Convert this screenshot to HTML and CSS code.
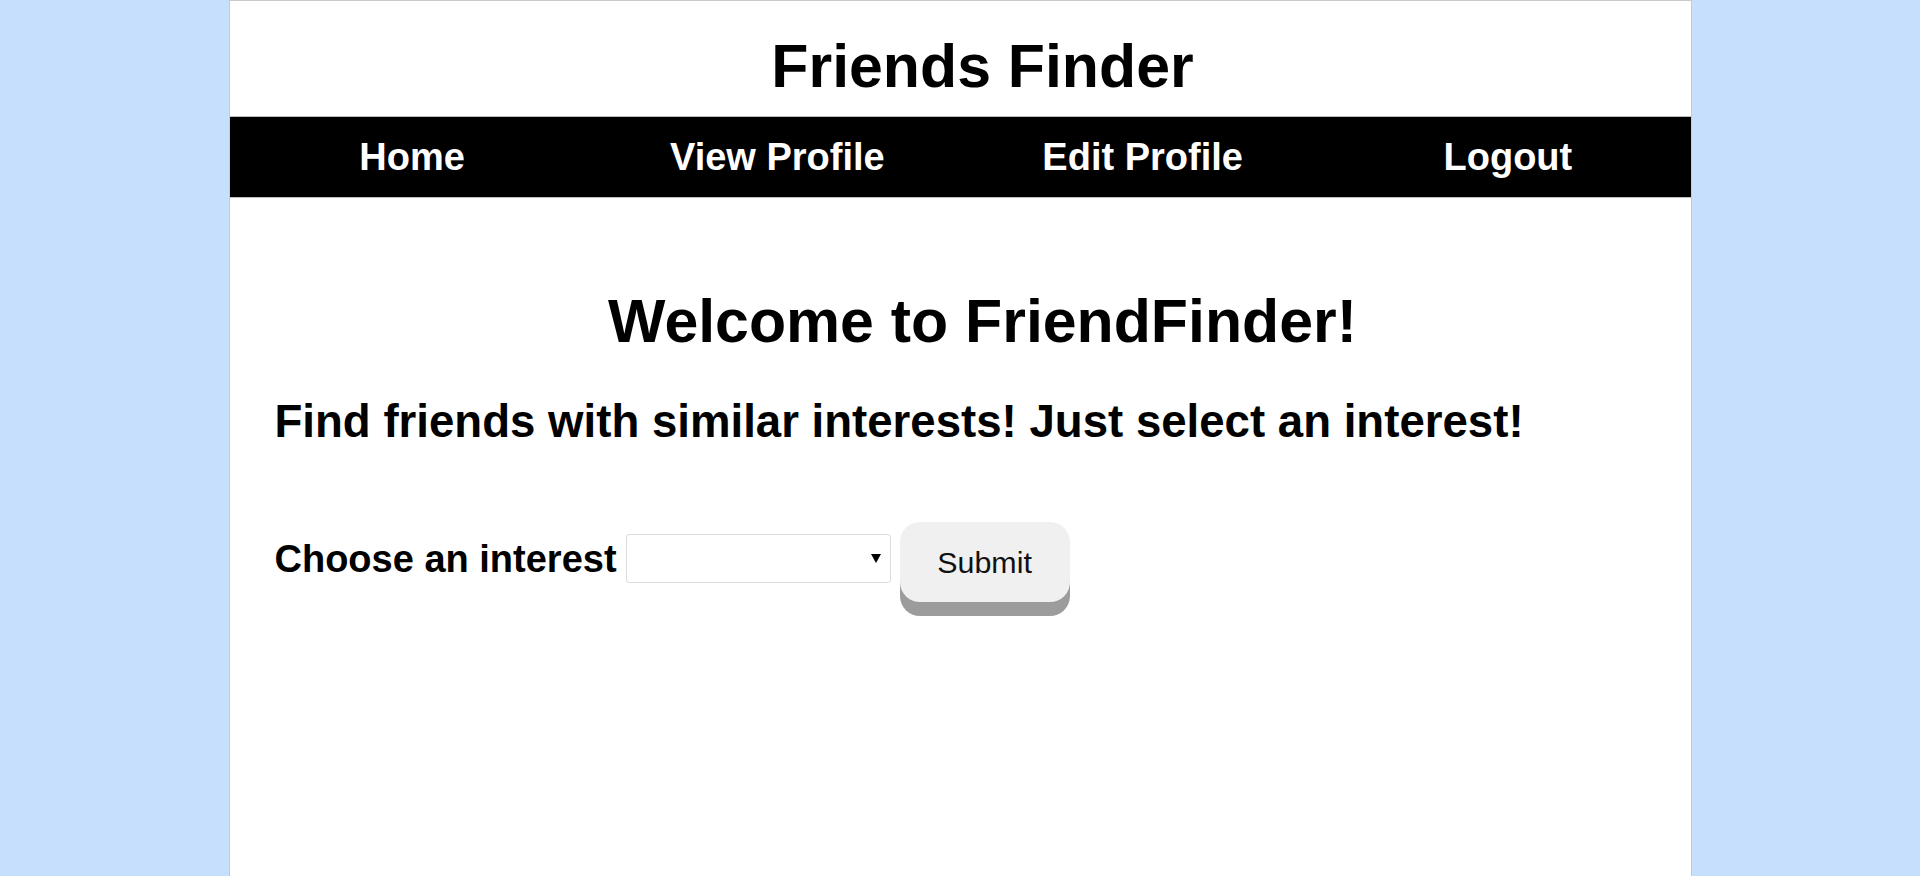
FILE: index.html
```html
<!DOCTYPE html>
<html lang="en">
<head>
<meta charset="utf-8">
<title>Friends Finder</title>
<link rel="stylesheet" href="styles.css">
</head>
<body>
<div class="page">
  <header class="site-header">
    <h1 class="site-title">Friends Finder</h1>
  </header>
  <nav class="main-nav">
    <a class="nav-link" href="#">Home</a>
    <a class="nav-link" href="#">View Profile</a>
    <a class="nav-link" href="#">Edit Profile</a>
    <a class="nav-link" href="#">Logout</a>
  </nav>
  <main class="content">
    <h1 class="welcome">Welcome to FriendFinder!</h1>
    <h2 class="tagline">Find friends with similar interests! Just select an interest!</h2>
    <form class="interest-form">
      <label class="interest-label" for="interest">Choose an interest</label>
      <div class="select-wrap">
        <select class="interest-select" id="interest" name="interest">
          <option value=""></option>
        </select>
      </div>
      <button class="submit-btn" type="button">Submit</button>
    </form>
  </main>
</div>
</body>
</html>
```

FILE: styles.css
```css
html, body {
  margin: 0;
  padding: 0;
}

body {
  background: #c6dffd;
  font-family: "Liberation Sans", Arial, sans-serif;
  font-size: 30.4px;
  color: #000;
}

.page {
  width: 1461px;
  min-height: 876px;
  margin: 0 auto;
  background: #fff;
  border: 1px solid #c9c9c9;
  border-bottom: none;
  box-sizing: content-box;
}

.site-header {
  height: 115px;
  box-sizing: border-box;
  padding-top: 30px;
  padding-left: 45px;
}

.site-title {
  margin: 0;
  font-size: 60.8px;
  font-weight: bold;
  text-align: center;
}

.main-nav {
  display: grid;
  grid-template-columns: repeat(4, 1fr);
  height: 80px;
  background: #000;
  border-top: 1px solid #bdbdbd;
  border-bottom: 1px solid #bdbdbd;
  align-items: center;
}

.nav-link {
  color: #fff;
  text-decoration: none;
  font-weight: bold;
  font-size: 38px;
  text-align: center;
  padding-top: 1px;
}

.content {
  padding-left: 45px;
  padding-top: 88px;
}

.welcome {
  margin: 0;
  font-size: 60.8px;
  font-weight: bold;
  text-align: center;
}

.tagline {
  margin: 40px 0 0 0;
  font-size: 45.6px;
  font-weight: bold;
}

.interest-form {
  display: flex;
  align-items: flex-start;
  margin-top: 74px;
}

.interest-label {
  font-size: 38px;
  font-weight: bold;
  margin-top: 16px;
}

.select-wrap {
  position: relative;
  margin-left: 9px;
  margin-top: 12px;
}

.select-wrap::after {
  content: "";
  position: absolute;
  right: 10px;
  top: 20px;
  width: 0;
  height: 0;
  border-left: 5.5px solid transparent;
  border-right: 5.5px solid transparent;
  border-top: 9px solid #000;
  pointer-events: none;
}

.interest-select {
  display: block;
  width: 265px;
  height: 49px;
  box-sizing: border-box;
  border: 1px solid #dcdcdc;
  border-radius: 3px;
  background: #fff;
  appearance: none;
  -webkit-appearance: none;
  font-family: "Liberation Sans", Arial, sans-serif;
  font-size: 30px;
  outline: none;
}

.submit-btn {
  display: flex;
  align-items: center;
  justify-content: center;
  margin-left: 9px;
  width: 170px;
  height: 80px;
  box-sizing: border-box;
  padding: 0;
  border: none;
  border-radius: 20px;
  background: #f0f0f0;
  box-shadow: 0 14px 0 #9c9c9c;
  font-family: "Liberation Sans", Arial, sans-serif;
  font-size: 30.4px;
  color: #111;
}
```
